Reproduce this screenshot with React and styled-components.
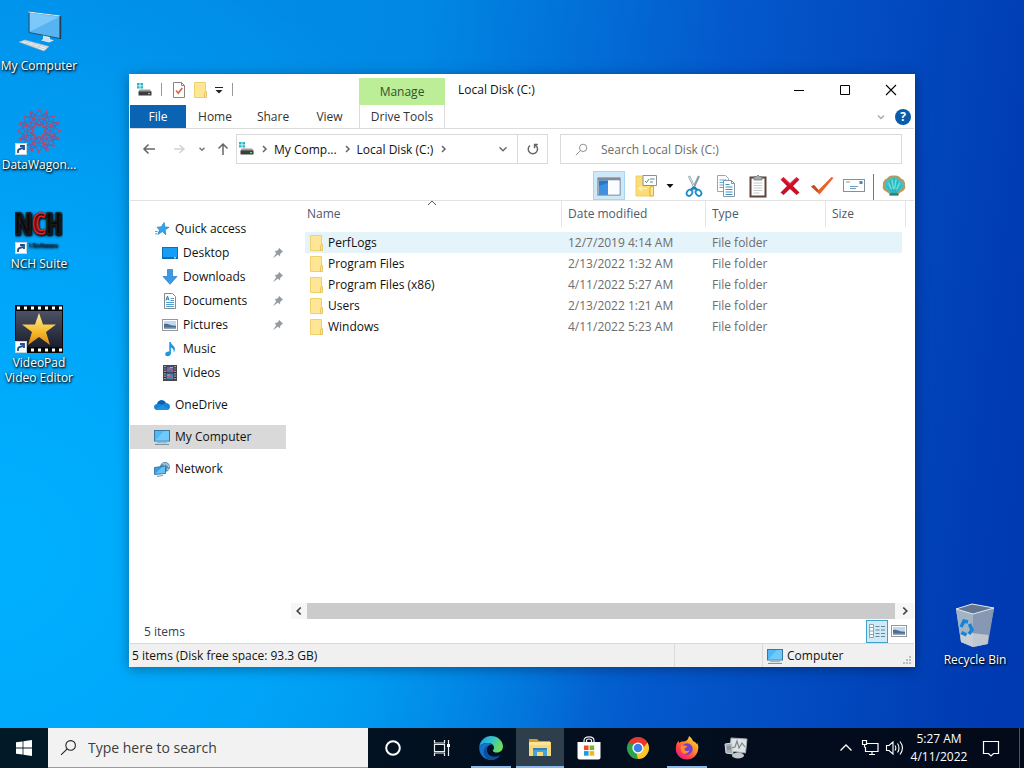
import React from 'react'
import styled, { createGlobalStyle, css } from 'styled-components'

const GlobalStyle = createGlobalStyle`
	* {
		box-sizing: border-box;
	}
	body {
		margin: 0;
		font-family: 'Open Sans', 'Noto Sans', sans-serif;
		font-size: 12px;
		color: #111;
	}
	button, input {
		font: inherit;
		color: inherit;
		background: none;
		border: 0;
		padding: 0;
		margin: 0;
	}
	a {
		color: inherit;
		text-decoration: none;
	}
	ul {
		list-style: none;
		margin: 0;
		padding: 0;
	}
	svg {
		display: block;
		flex: none;
	}
`

/* ---------- icons ---------- */

const Svg = ({ size = 16, w, h, box = 16, children }) => (
	<svg width={w || size} height={h || size} viewBox={typeof box === 'string' ? box : `0 0 ${box} ${box}`} fill="none" aria-hidden="true">
		{children}
	</svg>
)

const Line = ({ d, size = 16, box = 16, color = '#666', width = 1.5 }) => (
	<Svg size={size} box={box}>
		<path d={d} stroke={color} strokeWidth={width} />
	</Svg>
)

const DriveIcon = () => (
	<Svg>
		<path d="M1 1h2.600v2.400H1zM4.400 1H7v2.400H4.400zM1 4.200h2.600v2.400H1zM4.400 4.200H7v2.400H4.400z" fill="#25b5c4" />
		<path d="M3.500 7.500h10.500l1.500 2.500h-13z" fill="#9a9a9a" />
		<rect x="2.500" y="9.500" width="13" height="4" fill="#3d3d3d" />
		<rect x="12" y="11" width="2" height="1.200" fill="#5fe070" />
	</Svg>
)

const PropsIcon = () => (
	<Svg>
		<path d="M2.500.5h8l3 3v12h-11z" fill="#fff" stroke="#858585" />
		<path d="M10.500.5v3h3" stroke="#858585" />
		<path d="M5 8.500l2.300 2.500 4-5" stroke="#dd6b50" strokeWidth="1.800" />
	</Svg>
)

const FolderIcon = () => (
	<Svg>
		<path d="M1.500.5h11v15h-11z" fill="#ffe596" stroke="#f0cf6d" />
		<path d="M11.500 15.500V11l1-1.500h1v6z" fill="#ffe793" stroke="#e3bd55" strokeWidth=".8" />
	</Svg>
)

const StarIcon = () => (
	<Svg>
		<path d="M10.200 1.500l.6 4.500 4.200.3-3.800 2.500.6 5-3.400-3.300-4.600 3 1.700-4.500-2.500-2.700 4.100-.4z" fill="#35a5ea" stroke="#1781cc" strokeWidth=".7" />
		<path d="M1 10.500h2.500M1 12.800h2" stroke="#35a5ea" />
	</Svg>
)

const DesktopIcon = () => (
	<Svg>
		<rect x=".5" y="2.500" width="15" height="11" fill="#169df5" stroke="#0b71b9" />
		<path d="M1 12.800h14" stroke="#1b5f93" strokeWidth="1.200" />
		<path d="M12 12.800h2" stroke="#fff" strokeWidth="1" />
	</Svg>
)

const DownloadIcon = () => (
	<Svg>
		<path d="M5.500.5h5v7h4.500L8 15.300 1 7.500h4.500z" fill="#3b9ae8" stroke="#2478bd" strokeWidth=".7" />
	</Svg>
)

const DocIcon = () => (
	<Svg>
		<path d="M2.500.5h8l3 3v12h-11z" fill="#fff" stroke="#838b90" />
		<path d="M8.500 5.500H12M8.500 7.500H12M4 9.500h8M4 11.500h8M4 13.500h8" stroke="#4192c5" strokeWidth=".9" />
		<path d="M4 7.500l1.500-4.500L7 7.500M4.500 6h2" stroke="#2c7db0" />
	</Svg>
)

const PictureIcon = () => (
	<Svg>
		<rect x=".5" y="2.500" width="15" height="11" fill="#fff" stroke="#979797" />
		<path d="M2 4h12v8H2z" fill="#bed9f2" />
		<path d="M2 7c4-.8 6 2 12 1.800V12H2z" fill="#4e6d8f" />
		<path d="M2 10.500h12V12H2z" fill="#8fa7ba" />
	</Svg>
)

const MusicIcon = () => (
	<Svg>
		<path d="M7.300 1h1.600c.2 3 4.100 3.800 4 7.200 0 1.300-.6 2.300-1.300 3 .5-2.600-.6-4-2.700-4.700v5.700c0 1.800-1.600 3-3.300 3-1.500 0-2.400-.9-2.400-2 0-1.600 1.800-2.800 4.100-2.600z" fill="#1c97dc" />
	</Svg>
)

const VideoIcon = () => (
	<Svg>
		<rect x="1.500" y=".5" width="13" height="15" fill="#2e2e34" stroke="#474747" />
		<path d="M3 1v14M13 1v14" stroke="#e8e8e8" strokeWidth="1.200" strokeDasharray="1.200 1.200" />
		<rect x="4.500" y="1.500" width="7" height="6" fill="#536ba6" />
		<rect x="4.500" y="8.500" width="7" height="6" fill="#3d84bd" />
		<path d="M5 5.500l3-2 3 3M5 12.500l3-1.500 3 2" stroke="#c65a7b" strokeWidth="1.200" />
		<path d="M8 2.500h3M5 10h3" stroke="#cfb04e" />
	</Svg>
)

const CloudIcon = () => (
	<Svg>
		<path d="M3.500 13C1.500 13 0 11.700 0 9.900 0 8.200 1.400 7 3 6.900 3.600 4.700 5.500 3.200 7.600 3.200c2 0 3.500 1.100 4.300 2.900C14.200 6.200 16 7.700 16 9.700 16 11.600 14.600 13 12.700 13z" fill="#1583d8" />
		<path d="M3 6.900C3.600 4.700 5.500 3.200 7.600 3.200c2 0 3.500 1.100 4.300 2.900-1.500 0-2.800.6-3.700 1.700C6.600 6.900 4.800 6.600 3 6.900z" fill="#0a5fae" />
		<path d="M1.500 12.300L8.200 8l6.600 4.200c-.6.5-1.300.8-2.100.8H3.500c-.7 0-1.400-.3-2-.7z" fill="#1f93e3" />
	</Svg>
)

const ComputerIcon = () => (
	<Svg>
		<rect x=".5" y="1.500" width="15" height="10.500" fill="#4fb8f5" stroke="#38779f" />
		<path d="M1 11.500L10 2h5v9.500z" fill="#6fc9fb" />
		<path d="M3 13.500h10" stroke="#a2b4be" />
		<path d="M1 15.400h14" stroke="#6f8b9b" />
	</Svg>
)

const NetworkIcon = () => (
	<Svg>
		<circle cx="11" cy="6" r="5" fill="#5a93b6" />
		<path d="M8.500 3c2-1 3 1 2 2M12 2c0 2 2.500 2 3 4M13 8l2 1" stroke="#bcd2dc" strokeWidth="1.200" />
		<path d="M.5 6.500l11-1.500v7.500L.5 13.500z" fill="#399de0" stroke="#226b9e" strokeWidth=".8" />
		<path d="M1.200 12.800L8 6l3-.4v6.300z" fill="#65c1f5" />
		<path d="M3 15.300l6-.8" stroke="#84a1b1" strokeWidth="1.200" />
	</Svg>
)

const PinIcon = () => (
	<Svg size={12} box={12}>
		<path d="M7 .8L11.200 5l-1.300.2-1.700 1.700-.2 2.600-2-2L1 11.200l3.300-5.300-1.800-2 2.600-.2 1.700-1.600z" fill="#939ba1" />
	</Svg>
)

const SearchIcon = ({ size, color }) => (
	<Svg size={size}>
		<circle cx="10" cy="6" r="4.500" stroke={color} />
		<path d="M6.800 9.200L1 15" stroke={color} />
	</Svg>
)

const PanesIcon = () => (
	<Svg w={24} h={20} box="0 0 24 20">
		<rect x="1" y="2" width="22" height="17" fill="#dceffc" stroke="#66707a" />
		<path d="M1 2h22v2.500H1z" fill="#858c93" />
		<rect x="2" y="4.500" width="9" height="14" fill="#2479cf" />
		<rect x="11" y="4.500" width="11.500" height="14" fill="#fafdff" />
		<path d="M2 10l9-3v11.500H2z" fill="#3d91e0" />
	</Svg>
)

const FolderOptionsIcon = () => (
	<Svg size={24} box={24}>
		<path d="M2 2h16v20H2z" fill="#fbdc75" stroke="#f0cf68" />
		<path d="M16 22v-8l2-2h1.500v10z" fill="#ffe78e" stroke="#d8ae3c" />
		<path d="M9 1.500h13.500v10H9z" fill="#fff" stroke="#8b9298" />
		<path d="M11 7l1.500 1.500L15 5M16 5h4.500M16 8h3" stroke="#5584a8" />
		<path d="M5 14.500h8M8 12l-3 2.500L8 17" stroke="#fff0b3" strokeWidth="1.300" />
	</Svg>
)

const CutIcon = () => (
	<Svg size={24} box={24}>
		<path d="M7 2l6.500 14M17 2l-6.500 14" stroke="#8b9aa5" strokeWidth="2.200" />
		<path d="M7.300 2.500L12 12.500" stroke="#e7eef2" />
		<path d="M12 13l-3.500 3M12 13l3.500 3" stroke="#187db9" strokeWidth="2.200" />
		<ellipse cx="7.500" cy="18.800" rx="2.600" ry="3.200" transform="rotate(35 7.500 18.800)" stroke="#168bc9" strokeWidth="1.800" />
		<ellipse cx="16.500" cy="18.800" rx="2.600" ry="3.200" transform="rotate(-35 16.500 18.800)" stroke="#168bc9" strokeWidth="1.800" />
	</Svg>
)

const CopyIcon = () => (
	<Svg size={24} box={24}>
		<path d="M3.500 1.500h8l3 3v13h-11z" fill="#fff" stroke="#9aa8b3" />
		<path d="M5.500 6h7M5.500 8.500h7M5.500 11h7M5.500 13.500h5" stroke="#68a4cc" />
		<path d="M9.500 6.500h8l3 3v13h-11z" fill="#fff" stroke="#8797a3" />
		<path d="M17.500 6.500v3h3" stroke="#8797a3" />
		<path d="M11.500 10.500h4M11.500 13h7M11.500 15.500h7M11.500 18h7M11.500 20.500h7" stroke="#3f8fc5" />
	</Svg>
)

const PasteIcon = () => (
	<Svg size={24} box={24}>
		<rect x="4.500" y="3.500" width="15" height="19" fill="#fff" stroke="#5b4439" strokeWidth="2" />
		<path d="M8 2.500h2.500L12 1l1.500 1.500H16v3.500H8z" fill="#a5aaac" stroke="#747a7d" strokeWidth=".8" />
		<path d="M7.500 9h9M7.500 11.500h9M7.500 14h9M7.500 16.500h9M7.500 19h6" stroke="#c3c9cc" />
	</Svg>
)

const DeleteIcon = () => (
	<Svg size={24} box={24}>
		<path d="M2.500 5.500L5.500 3 12 9l6.500-6 3 2.500L15 12l6.500 6.500-3 2.500L12 15l-6.500 6-3-2.500L9 12z" fill="#c9102a" />
		<path d="M3.500 5.500l2-1.500L12 10.300 18.500 4l1.500 1.500" stroke="#ee3a4c" />
	</Svg>
)

const CheckIcon = () => (
	<Svg size={24} box={24}>
		<path d="M1 12.500L4 11l4.500 5L21.500 3l2 1-14 16.500z" fill="#e8632c" />
		<path d="M1 12.500L4 11l4.500 5-.8 2.300z" fill="#c94d20" />
	</Svg>
)

const MailIcon = () => (
	<Svg size={24} box={24}>
		<rect x="1.500" y="5.500" width="21" height="12" fill="#fff" stroke="#84909a" />
		<rect x="17.500" y="7" width="3" height="3" fill="#3f8ac5" />
		<path d="M4 8h4M8 12.500h8M8 14.500h6" stroke="#6f9fc3" />
	</Svg>
)

const ShellIcon = () => (
	<Svg size={24} box={24}>
		<path d="M12 1.500c3-.5 5.500.5 7 3 3 1 4.500 4 4 6.500 1 3-.5 5.500-3 6.500L17 19.500v2H7v-2l-3-2c-2.500-1-4-3.500-3-6.500-.5-2.500 1-5.500 4-6.500 1.500-2.500 4-3.500 7-3z" fill="#b59a63" />
		<path d="M12 3.500c3 0 5 1.500 6 3 2.500 1 3.300 3 3 4.500.5 2-.5 4-3 5l-3.500 4h-5L6 16c-2.500-1-3.500-3-3-5-.3-1.500.5-3.500 3-4.500 1-1.500 3-3 6-3z" fill="#38c6cd" />
		<path d="M12 4v15M8 6l3 13M16 6l-3 13M4 11l6 8M20 11l-6 8" stroke="#22a6b0" strokeWidth=".7" />
		<path d="M10 6l1.500 9M14 6l-1.500 9M6.500 9l3 6M17.500 9l-3 6" stroke="#7ae2e1" strokeWidth="1.100" />
		<path d="M8 19h8v2.500H8z" fill="#2c8580" />
	</Svg>
)

const DetailsIcon = () => (
	<Svg w={18} h={16} box="0 0 18 16">
		<path d="M1.500 1.500h4v13h-4zM1.500 4.500h4M1.500 8h4M1.500 11.500h4" fill="#fff" stroke="#8da3b0" />
		<path d="M7.500 3.500h4M13 3.500h4M7.500 7h4M13 7h4M7.500 10.500h4M13 10.500h4M7.500 13.500h4M13 13.500h4" stroke="#6e8494" />
	</Svg>
)

const ShortcutArrow = styled.span`
	position: absolute;
	left: 0;
	bottom: 0;
	width: 12px;
	height: 12px;
	background: #fff;
	border: 1px solid #c7d3dd;
`

const BigComputer = () => (
	<Svg size={48} box={48}>
		<path d="M14 4l31 4v22.500L14 24.500z" fill="#55b4f1" stroke="#2e4f68" />
		<path d="M15 5l29 4L15 23.500z" fill="#7cc8f8" />
		<path d="M13.500 4l31.500 4" stroke="#e3f2fc" />
		<path d="M45.500 8v23" stroke="#263e50" strokeWidth="1.500" />
		<path d="M28 27.500l7 1.500v2l4 1.500-5 2-8-2 2-1.500z" fill="#d4e2eb" />
		<path d="M4 34l6-2 24 6.500-5 4.500z" fill="#edf1f3" stroke="#9faeb7" strokeWidth=".7" />
		<path d="M7 34.500l23 6.500M9 33l23 6.500M11 36.500l4-3M17 38.500l4-3M22 40l4-3" stroke="#b5c4cd" strokeWidth=".7" />
	</Svg>
)

const spokes = [0, 45, 90, 135, 180, 225, 270, 315]

const WagonIcon = () => (
	<Svg size={48} box={48}>
		{spokes.map(a => (
			<g key={a} transform={`rotate(${a} 24 24)`} stroke="#5f62a8" strokeWidth="1">
				<path d="M24 18l-6-6 6-9 6 9z M18 12h12 M18 12l-3-7 9 5 9-5-3 7" />
				<path d="M20 20l4-8 4 8" stroke="#9a4f80" />
				<g fill="#c34a68" stroke="none">
					<circle cx="24" cy="3.500" r="1.500" />
					<circle cx="15.500" cy="5.500" r="1.500" />
					<circle cx="18" cy="12" r="1.500" />
					<circle cx="30" cy="12" r="1.500" />
					<circle cx="24" cy="18" r="1.500" />
				</g>
			</g>
		))}
	</Svg>
)

const NchIcon = () => (
	<Svg size={48} box={48}>
		<text x="23" y="28" fontSize="29" fontWeight="700" textAnchor="middle" fontFamily="'Liberation Sans Narrow', 'Open Sans Condensed', 'Roboto Condensed', 'Liberation Sans', sans-serif" fill="#1b1c20" stroke="#1b1c20" strokeWidth="1.500">
			N<tspan fill="#e0262b" stroke="#e0262b">C</tspan>H
		</text>
		<text x="14" y="41" fontSize="6" fontWeight="700" fontFamily="Liberation Sans, sans-serif" fill="#15355e">l Software</text>
	</Svg>
)

const VideoPadIcon = () => (
	<Svg size={48} box={48}>
		<defs>
			<linearGradient id="vpStar" x1="0" y1="0" x2="0" y2="1">
				<stop offset="0" stopColor="#fff09a" />
				<stop offset=".6" stopColor="#f5b92a" />
				<stop offset="1" stopColor="#d98910" />
			</linearGradient>
			<linearGradient id="vpBg" x1="0" y1="0" x2="0" y2="1">
				<stop offset="0" stopColor="#4d5165" />
				<stop offset="1" stopColor="#1b1e2d" />
			</linearGradient>
		</defs>
		<rect width="48" height="48" fill="#080808" />
		<rect x="1" y="6" width="46" height="36" fill="url(#vpBg)" />
		<path d="M2 3h46M2 45h46" stroke="#fff" strokeWidth="3" strokeDasharray="3 4" />
		<path d="M24 8l4 11.500h13L31 27l4 13-11-8-11 8 4-13L7 19.500h13z" fill="url(#vpStar)" />
	</Svg>
)

const RecycleIcon = () => (
	<Svg size={48} box={48}>
		<path d="M5 7L21 2l22 4-7 36-14 3-12-5z" fill="#a9b9c8" />
		<path d="M5 7l17 5v33l-12-5z" fill="#a3b3c6" />
		<path d="M22 12l21-6-6 36-15 3z" fill="#8798b4" />
		<path d="M5 7L21 2l22 4-21 6z" fill="#63758f" stroke="#dfe7ee" />
		<path d="M9.500 33L21 31l16.500 2-1 9L22 45l-12-5z" fill="#d4d7da" opacity=".75" />
		<path d="M10 25l3-6 4 1M18.500 22l2.500 6-3 4M15.500 33l-5-2.500" stroke="#1583d6" strokeWidth="3.500" />
	</Svg>
)

/* ---------- task bar icons ---------- */

const StartIcon = () => (
	<Svg>
		<path d="M0 2.300L6.600 1.400v6.200H0zM7.400 1.300L16 0v7.600H7.400zM0 8.400h6.600v6.200L0 13.700zM7.400 8.400H16V16l-8.600-1.200z" fill="#fff" />
	</Svg>
)

const TaskViewIcon = () => (
	<Svg size={18} box={18}>
		<path d="M1.500 1v3h10V1M1.500 17v-3h10v3M1.500 5.500h10v7h-10zM15.500 1v16" stroke="#eee" strokeWidth="1.200" />
		<rect x="14" y="5" width="3" height="3" fill="#fff" />
	</Svg>
)

const EdgeIcon = () => (
	<Svg size={24} box={24}>
		<defs>
			<linearGradient id="edgeTop" x1="0" y1="0" x2="1" y2=".3">
				<stop offset="0" stopColor="#2197dd" />
				<stop offset=".5" stopColor="#2fc0d2" />
				<stop offset="1" stopColor="#6edc5d" />
			</linearGradient>
		</defs>
		<path d="M.3 10.500C1.300 4.500 6.200 0 12 0c6.800 0 12 5 12 10.500 0 3.800-2.800 6-6 6-2.600 0-4.200-1-4.200-1.800 0-.5 1.200-1 1.200-2.900 0-2.800-2.800-4.800-6.200-4.800-4 0-7 1.500-8.500 3.500z" fill="url(#edgeTop)" />
		<path d="M.3 10.500C1.800 8.300 5 7 8.800 7c1.600 0 3 .4 4 1.200-3 .3-5 3-5 5.800 0 5.500 5.700 8.500 11.500 6.700C17.200 22.800 14.700 24 12 24 5 24-.6 18 .3 10.500z" fill="#1473c8" />
		<path d="M12.800 8.200C9 8.800 7.800 11.500 7.800 14c0 5.500 6 8.600 13.700 5-2 3-5.500 5-9.500 5-4.500 0-7.300-4.200-7.300-8.200 0-4 3.800-7.800 8.100-7.600z" fill="#0d4d9f" />
	</Svg>
)

const ExplorerIcon = () => (
	<Svg size={24} box={24}>
		<path d="M1 3h8l2 2h11v4H1z" fill="#d89b27" />
		<path d="M1 7l22-1v14H1z" fill="#f8d775" />
		<path d="M1 6h21v3H1z" fill="#ffe396" />
		<path d="M5 20v-8h14v8h-4v-4H9v4z" fill="#43a2dc" />
		<path d="M5 12h14v2H5z" fill="#2e82b9" />
	</Svg>
)

const StoreIcon = () => (
	<Svg size={24} box={24}>
		<path d="M7 7V4.500C7 2 9 .8 12 .8s5 1.200 5 3.700V7M9.500 7V4.500c0-2 5-2 5 0V7" stroke="#f0f0f0" strokeWidth="1.200" />
		<path d="M.5 6h23v15.500a2 2 0 0 1-2 2h-19a2 2 0 0 1-2-2z" fill="#fff" />
		<path d="M7 9.500h4.600v4.600H7z" fill="#e9502e" />
		<path d="M12.600 9.500h4.600v4.600h-4.600z" fill="#76b82a" />
		<path d="M7 15.100h4.600v4.600H7z" fill="#1b9be0" />
		<path d="M12.600 15.100h4.600v4.600h-4.600z" fill="#f7b519" />
	</Svg>
)

const ChromeIcon = () => (
	<Svg size={24} box={24}>
		<path d="M12 12L2.470 6.500A11 11 0 0 1 21.530 6.500z" fill="#e5392e" />
		<path d="M12 12L2.470 6.500A11 11 0 0 0 12 23z" fill="#2da14b" />
		<path d="M12 12L21.530 6.500A11 11 0 0 1 12 23z" fill="#fcc72b" />
		<path d="M12 6.500h9.530L16 13z" fill="#e5392e" />
		<path d="M12 23l5-8.500-7 1z" fill="#fcc72b" />
		<path d="M2.470 6.500l5 8.500 1-6z" fill="#2da14b" />
		<circle cx="12" cy="12" r="5.600" fill="#fff" />
		<circle cx="12" cy="12" r="4.300" fill="#3b7fe8" />
	</Svg>
)

const FirefoxIcon = () => (
	<Svg size={24} box={24}>
		<defs>
			<linearGradient id="ffBody" x1="1" y1="0" x2="0.200" y2="1">
				<stop offset="0" stopColor="#fff04a" />
				<stop offset=".4" stopColor="#ff9a26" />
				<stop offset=".75" stopColor="#ff3e4c" />
				<stop offset="1" stopColor="#e61b86" />
			</linearGradient>
		</defs>
		<path d="M14 0c2.500 1.500 3.200 3.200 4 5 2 .7 3.500 2.200 4.200 3.800L22 6.500c1.200 1.800 1.500 4 1.300 6C22.700 19 18 23.500 12 23.500 5.500 23.500.8 18.500.8 12.700c0-3.700 1.200-6.200 2.700-8L4 7l2.500-1.500c2 .2 3.500 0 5-1 1.300-1 2-2.500 2.500-4.500z" fill="url(#ffBody)" />
		<circle cx="12" cy="13" r="5.700" fill="#6f40d8" />
		<path d="M6.500 9c2 .8 4 .3 6 1.200-1 1.500-3 1.500-3 3 .3 1.800 3 2.500 5 1-.8 3-4 4.300-6.500 3-2.300-1.500-3-5-1.500-8.200z" fill="#ff8a2b" />
	</Svg>
)

const MonitorIcon = () => (
	<Svg size={24} box={24}>
		<path d="M7 2l16 1-1.500 14L6 15z" fill="#dfe3e6" stroke="#a6adb1" />
		<path d="M1 8l7-1 1 11-7-1z" fill="#a8afb4" stroke="#d8dcde" />
		<path d="M8 12l3-1 2-6 2 7 3-5 3 4" stroke="#7c868c" strokeWidth="1.200" />
		<path d="M3 11h4M3 13h4" stroke="#747c82" />
		<ellipse cx="14" cy="19.500" rx="6" ry="3" fill="#c3c8cb" />
	</Svg>
)

const TrayNetwork = () => (
	<Svg size={18} box={18}>
		<path d="M6 4.500h11v8H4.500V8M8 15.500h6M11 12.500v3M1.500 1.500h4v4h-4zM3.500 5.500v3" stroke="#fff" strokeWidth="1.200" />
	</Svg>
)

const TraySpeaker = () => (
	<Svg size={18} box={18}>
		<path d="M1.500 6.500H4L8 3v12l-4-3.500H1.500zM10 6.500c1 1.500 1 3.500 0 5M12.500 4.500c2 2.500 2 6.500 0 9M15 2.500c3 4 3 9 0 13" stroke="#fff" strokeWidth="1.100" />
	</Svg>
)

/* ---------- desktop ---------- */

const Screen = styled.div`
	display: flex;
	flex-direction: column;
	min-height: 100vh;
	background:
		radial-gradient(ellipse 60% 80% at 0% 72%, #00b0ff 0%, rgba(0, 170, 252, 0.85) 45%, rgba(0, 140, 235, 0) 100%),
		linear-gradient(97deg, #0090ea 0%, #0088e4 38%, #0458cb 66%, #003ab2 96%);
`

const DesktopArea = styled.main`
	position: relative;
	flex: 1;
`

const Shortcuts = styled.div`
	display: grid;
	grid-auto-rows: 99px;
	width: 78px;
	padding-top: 8px;
`

const Shortcut = styled.a`
	display: flex;
	flex-direction: column;
	align-items: center;
	gap: 2px;
	width: 78px;
	min-height: 99px;
	color: #fff;
	line-height: 15px;
	text-align: center;
	white-space: nowrap;
	text-shadow: 1px 1px 2px #000, 0 1px 3px rgba(0, 0, 0, 0.8);
`

const ShortcutPicture = styled.span`
	position: relative;
`

const BinSlot = styled.div`
	position: absolute;
	right: 10px;
	bottom: 27px;
`

const DesktopShortcut = ({ icon, linked, children }) => (
	<Shortcut href="#">
		<ShortcutPicture>
			{icon}
			{linked && (
				<ShortcutArrow>
					<Line size={10} box={10} d="M2 9V7q0-2 5-3M4 2h4v4" color="#1d4f91" width={1.8} />
				</ShortcutArrow>
			)}
		</ShortcutPicture>
		<span>{children}</span>
	</Shortcut>
)

/* ---------- explorer window ---------- */

const Window = styled.section`
	position: absolute;
	top: 74px;
	right: 109px;
	bottom: 61px;
	left: 129px;
	display: flex;
	flex-direction: column;
	padding: 0 1px;
	background: #fff;
	box-shadow: 0 2px 12px rgba(0, 0, 0, 0.35);
`

const TitleBar = styled.header`
	display: grid;
	grid-template-columns: 229px 86px 1fr auto;
	height: 31px;
`

const QuickTools = styled.div`
	display: flex;
	align-items: center;
	gap: 6px;
	padding-left: 6px;
`

const IconButton = styled.button`
	display: flex;
	align-items: center;
	justify-content: center;
	width: ${p => p.$w || 16}px;
	height: ${p => p.$h || 16}px;
`

const Separator = styled.span`
	width: 1px;
	height: ${p => p.$h || 13}px;
	background: ${p => p.$color || '#999'};
	margin: 0 3px;
`

const ManageTab = styled.div`
	display: flex;
	align-items: center;
	justify-content: center;
	margin-top: 4px;
	background: #bcee98;
	color: #33502a;
`

const WindowTitle = styled.h1`
	margin: 0;
	padding-left: 13px;
	font-size: 12px;
	font-weight: 400;
	line-height: 31px;
`

const WindowButtons = styled.div`
	display: flex;
`

const Ribbon = styled.nav`
	display: flex;
	height: 24px;
	border-bottom: 1px solid #dcdcdc;
	color: #333;
`

const RibbonTab = styled.button`
	width: ${p => p.$w}px;
	${p => p.$file && css`
		background: #0a63b3;
		color: #fff;
	`}
	${p => p.$context && css`
		margin-left: 2px;
		border-left: 1px solid #dcdcdc;
		border-right: 1px solid #dcdcdc;
	`}
`

const RibbonEnd = styled.div`
	display: flex;
	align-items: center;
	gap: 6px;
	margin-left: auto;
	padding-right: 3px;
`

const HelpButton = styled.button`
	width: 16px;
	height: 16px;
	border-radius: 50%;
	background: #0a5cab;
	color: #fff;
	font-weight: 700;
	line-height: 16px;
`

const AddressRow = styled.div`
	display: flex;
	align-items: center;
	height: 40px;
	padding: 0 12px 0 4px;
`

const AddressFields = styled.div`
	display: grid;
	grid-template-columns: 312fr 342fr;
	gap: 12px;
	flex: 1;
`

const AddressBox = styled.div`
	display: flex;
	align-items: center;
	height: 30px;
	border: 1px solid #d9d9d9;
	padding-left: 1px;
`

const Crumb = styled.a`
	white-space: nowrap;
`

const AddressEnd = styled.div`
	display: flex;
	align-self: stretch;
	margin-left: auto;
`

const RefreshButton = styled(IconButton)`
	border-left: 1px solid #d9d9d9;
`

const SearchBox = styled.label`
	display: flex;
	align-items: center;
	gap: 13px;
	height: 30px;
	padding: 0 14px;
	border: 1px solid #d9d9d9;

	input {
		flex: 1;
		min-width: 0;
		outline: 0;
	}
	input::placeholder {
		color: #6d6d6d;
		opacity: 1;
	}
`

const ToolRow = styled.div`
	display: flex;
	align-items: flex-end;
	justify-content: flex-end;
	height: 32px;
	padding-right: 3px;
	border-bottom: 1px solid #e2e2e2;
`

const ToolButton = styled(IconButton)`
	${p => p.$active && css`
		margin-right: 5px;
		background: #cce8f9;
		border: 1px solid #a9d6f0;
	`}
`

const Body = styled.div`
	display: flex;
	flex: 1;
	min-height: 0;
`

const SidePane = styled.nav`
	width: 161px;
	padding: 16px 5px 0 0;
`

const Tree = styled.ul`
	margin-bottom: 8px;
`

const TreeLink = styled.a`
	display: flex;
	align-items: center;
	gap: 5px;
	height: 24px;
	padding: 0 2px 1px ${p => (p.$nested ? 32 : 24)}px;
	background: ${p => (p.$selected ? '#d9d9d9' : 'transparent')};

	svg:last-child:not(:first-child) {
		margin-left: auto;
	}
`

const FilePane = styled.div`
	display: flex;
	flex-direction: column;
	flex: 1;
	min-width: 0;
`

const TableArea = styled.div`
	flex: 1;
	padding: 0 8px 0 14px;
`

const FileTable = styled.table`
	width: 100%;
	table-layout: fixed;
	border-collapse: separate;
	border-spacing: 0;

	th {
		position: relative;
		padding: 0 0 5px;
		font-weight: 400;
		text-align: left;
		color: #4c5a6b;
	}
	td {
		height: 21px;
		padding: 0 0 0 6px;
		line-height: 16px;
		color: #6d6d6d;
	}
	td:first-child {
		padding-left: 4px;
		color: #111;
	}
	td:last-child {
		border-right: 4px solid transparent;
		background-clip: padding-box;
	}
`

const HeadCell = styled.span`
	display: block;
	padding-left: ${p => (p.$first ? 2 : 6)}px;
	line-height: 26px;
	border-right: 1px solid #e5e5e5;
`

const SortMark = styled.span`
	position: absolute;
	top: -2px;
	left: 50%;
	margin-left: -7px;
`

const FileRow = styled.tr`
	td {
		background-color: ${p => (p.$hover ? '#e5f3fb' : 'transparent')};
	}
`

const FileName = styled.a`
	display: flex;
	align-items: center;
	gap: 3px;
`

const ScrollBar = styled.div`
	display: flex;
	height: 16px;
	background: #f6f6f6;
`

const ScrollThumb = styled.div`
	flex: 1;
	background: #cbcbcb;
`

const DetailsBar = styled.div`
	display: flex;
	align-items: center;
	height: 24px;
	padding: 0 4px 0 14px;
	color: #33405a;
`

const ViewButtons = styled.div`
	display: flex;
	margin-left: auto;
`

const ViewButton = styled(IconButton)`
	${p => p.$active && css`
		background: #cdeaf8;
		border: 1px solid #3fa0c9;
	`}
`

const StatusBar = styled.footer`
	display: flex;
	height: 24px;
	line-height: 23px;
	background: #f0f0f0;
	border-top: 1px solid #d9d9d9;
`

const StatusCell = styled.div`
	display: flex;
	align-items: center;
	gap: 4px;
	padding-left: ${p => p.$pad || 0}px;
	border-left: ${p => (p.$line ? '1px solid #dadada' : '0')};
	${p => (p.$w ? css`width: ${p.$w}px;` : css`flex: 1;`)}
`

const Grip = styled.span`
	align-self: flex-end;
	margin: 0 2px 2px auto;
`

/* ---------- task bar ---------- */

const TaskBar = styled.footer`
	display: flex;
	gap: 1px;
	height: 40px;
	background: linear-gradient(90deg, #021a28, #020f1f 50%, #030a1a);
	color: #fff;
`

const StartButton = styled(IconButton)`
	margin-right: -1px;
`

const TaskSearch = styled.label`
	display: flex;
	align-items: center;
	gap: 11px;
	width: 320px;
	padding: 0 12px;
	background: #f2f2f2;
	border: 1px solid #9a9a9a;
	border-width: 0 0 1px;

	input {
		flex: 1;
		min-width: 0;
		outline: 0;
		font-size: 14px;
		color: #222;
	}
	input::placeholder {
		color: #3d3d3d;
		opacity: 1;
	}
`

const TaskButton = styled.button`
	position: relative;
	display: flex;
	align-items: center;
	justify-content: center;
	width: 48px;
	background: ${p => (p.$active ? '#2f3e4b' : 'transparent')};

	&::after {
		content: '';
		position: absolute;
		bottom: 0;
		left: ${p => (p.$active ? 0 : 4)}px;
		right: ${p => (p.$active ? 0 : 4)}px;
		height: 2px;
		background: ${p => (p.$running ? '#8ab8ea' : 'transparent')};
	}
`

const Tray = styled.div`
	display: flex;
	align-items: center;
	margin-left: auto;
`

const Clock = styled.time`
	width: 66px;
	text-align: center;
	line-height: 18px;
`

const ShowDesktop = styled.button`
	width: 5px;
	height: 40px;
	margin-left: 9px;
	border-left: 1px solid #4b535e;
`

const quickLinks = [
	{ name: 'Desktop', icon: <DesktopIcon />, pinned: true },
	{ name: 'Downloads', icon: <DownloadIcon />, pinned: true },
	{ name: 'Documents', icon: <DocIcon />, pinned: true },
	{ name: 'Pictures', icon: <PictureIcon />, pinned: true },
	{ name: 'Music', icon: <MusicIcon /> },
	{ name: 'Videos', icon: <VideoIcon /> },
]

const folders = [
	{ name: 'PerfLogs', date: '12/7/2019 4:14 AM' },
	{ name: 'Program Files', date: '2/13/2022 1:32 AM' },
	{ name: 'Program Files (x86)', date: '4/11/2022 5:27 AM' },
	{ name: 'Users', date: '2/13/2022 1:21 AM' },
	{ name: 'Windows', date: '4/11/2022 5:23 AM' },
]

const tools = [
	{ name: 'Cut', icon: <CutIcon /> },
	{ name: 'Copy', icon: <CopyIcon /> },
	{ name: 'Paste', icon: <PasteIcon /> },
	{ name: 'Delete', icon: <DeleteIcon /> },
	{ name: 'Properties', icon: <CheckIcon /> },
	{ name: 'Email', icon: <MailIcon /> },
]

const apps = [
	{ name: 'Cortana', icon: <Svg><circle cx="8" cy="8" r="6.800" stroke="#fff" strokeWidth="2" /></Svg> },
	{ name: 'Task View', icon: <TaskViewIcon /> },
	{ name: 'Edge', icon: <EdgeIcon />, running: true },
	{ name: 'File Explorer', icon: <ExplorerIcon />, running: true, active: true },
	{ name: 'Store', icon: <StoreIcon /> },
	{ name: 'Chrome', icon: <ChromeIcon /> },
	{ name: 'Firefox', icon: <FirefoxIcon />, running: true },
	{ name: 'Resource Monitor', icon: <MonitorIcon /> },
]

const CHEVRON_DOWN = 'M4 6l4 4 4-4'

const CrumbArrow = () => <Line d="M9 7l3 3-3 3" size={20} box={20} />

const Title = () => (
	<TitleBar>
		<QuickTools>
			<DriveIcon />
			<Separator />
			<IconButton aria-label="Properties"><PropsIcon /></IconButton>
			<IconButton aria-label="New folder"><FolderIcon /></IconButton>
			<IconButton aria-label="Customize" $w={8}>
				<Svg size={8} box={8}><path d="M0 1.500h8" stroke="#222" /><path d="M.5 4h7L4 7.500z" fill="#222" /></Svg>
			</IconButton>
			<Separator />
		</QuickTools>
		<ManageTab>Manage</ManageTab>
		<WindowTitle>Local Disk (C:)</WindowTitle>
		<WindowButtons>
			<IconButton aria-label="Minimize" $w={46} $h={31}><Line size={12} box={12} d="M1 6.500h10" color="#000" width={1} /></IconButton>
			<IconButton aria-label="Maximize" $w={46} $h={31}><Line size={12} box={12} d="M1.500 1.500h9v9h-9z" color="#000" width={1} /></IconButton>
			<IconButton aria-label="Close" $w={46} $h={31}><Line size={12} box={12} d="M1 1l10 10M11 1L1 11" color="#000" width={1.1} /></IconButton>
		</WindowButtons>
	</TitleBar>
)

const Address = () => (
	<AddressRow>
		<IconButton aria-label="Back" $w={30}><Line d="M14 8H3M7.500 3.500L3 8l4.500 4.500" /></IconButton>
		<IconButton aria-label="Forward" $w={30}><Line d="M3 8h10M8.500 4L13 8l-4.500 4" color="#d2d2d2" /></IconButton>
		<IconButton aria-label="Recent"><Line size={10} d={CHEVRON_DOWN} color="#777" width={2.4} /></IconButton>
		<IconButton aria-label="Up" $w={26}><Line d="M8 14V3M3.500 7.500L8 3l4.500 4.500" /></IconButton>
		<AddressFields>
			<AddressBox>
				<DriveIcon />
				<CrumbArrow />
				<Crumb href="#">My Comp...</Crumb>
				<CrumbArrow />
				<Crumb href="#">Local Disk (C:)</Crumb>
				<CrumbArrow />
				<AddressEnd>
					<IconButton aria-label="Previous locations" $w={28} $h={28}><Line size={14} d={CHEVRON_DOWN} /></IconButton>
					<RefreshButton aria-label="Refresh" $w={30} $h={28}>
						<Svg size={14}><path d="M4.500 4A5.300 5.300 0 1 0 10.500 3.500M13.500 2.800H9.800V7" stroke="#666" strokeWidth="1.700" /></Svg>
					</RefreshButton>
				</AddressEnd>
			</AddressBox>
			<SearchBox>
				<SearchIcon size={13} color="#777" />
				<input type="search" aria-label="Search Local Disk (C:)" placeholder="Search Local Disk (C:)" />
			</SearchBox>
		</AddressFields>
	</AddressRow>
)

const Tools = () => (
	<ToolRow>
		<ToolButton aria-label="Navigation pane" $w={32} $h={29} $active><PanesIcon /></ToolButton>
		<ToolButton aria-label="Folder options" $w={32} $h={29}><FolderOptionsIcon /></ToolButton>
		<ToolButton aria-label="More options" $w={16} $h={29}>
			<Svg size={8} box={8}><path d="M.5 2h7L4 6z" fill="#111" /></Svg>
		</ToolButton>
		{tools.map(tool => (
			<ToolButton key={tool.name} aria-label={tool.name} $w={32} $h={29}>{tool.icon}</ToolButton>
		))}
		<Separator $h={26} $color="#777" />
		<ToolButton aria-label="Classic settings" $w={34} $h={29}><ShellIcon /></ToolButton>
	</ToolRow>
)

const Sidebar = () => (
	<SidePane aria-label="Folders">
		<Tree>
			<li><TreeLink href="#"><StarIcon />Quick access</TreeLink></li>
			{quickLinks.map(link => (
				<li key={link.name}>
					<TreeLink href="#" $nested>
						{link.icon}
						{link.name}
						{link.pinned && <PinIcon />}
					</TreeLink>
				</li>
			))}
		</Tree>
		<Tree><li><TreeLink href="#"><CloudIcon />OneDrive</TreeLink></li></Tree>
		<Tree><li><TreeLink href="#" $selected><ComputerIcon />My Computer</TreeLink></li></Tree>
		<Tree><li><TreeLink href="#"><NetworkIcon />Network</TreeLink></li></Tree>
	</SidePane>
)

const Files = () => (
	<FilePane>
		<TableArea>
			<FileTable>
				<colgroup>
					<col />
					<col width="144" />
					<col width="120" />
					<col width="80" />
				</colgroup>
				<thead>
					<tr>
						<th>
							<HeadCell $first>Name</HeadCell>
							<SortMark><Line size={10} box={10} d="M1 6l4-4 4 4" color="#555" width={1} /></SortMark>
						</th>
						<th><HeadCell>Date modified</HeadCell></th>
						<th><HeadCell>Type</HeadCell></th>
						<th><HeadCell>Size</HeadCell></th>
					</tr>
				</thead>
				<tbody>
					{folders.map((folder, i) => (
						<FileRow key={folder.name} $hover={i === 0}>
							<td><FileName href="#"><FolderIcon />{folder.name}</FileName></td>
							<td>{folder.date}</td>
							<td>File folder</td>
							<td />
						</FileRow>
					))}
				</tbody>
			</FileTable>
		</TableArea>
		<ScrollBar>
			<IconButton aria-label="Scroll left"><Line d="M10 4L6 8l4 4" color="#444" width={2} size={14} /></IconButton>
			<ScrollThumb />
			<IconButton aria-label="Scroll right" $w={19}><Line d="M6 4l4 4-4 4" color="#444" width={2} size={14} /></IconButton>
		</ScrollBar>
	</FilePane>
)

const Explorer = () => (
	<Window>
		<Title />
		<Ribbon>
			<RibbonTab $w={56} $file>File</RibbonTab>
			<RibbonTab $w={58}>Home</RibbonTab>
			<RibbonTab $w={58}>Share</RibbonTab>
			<RibbonTab $w={55}>View</RibbonTab>
			<RibbonTab $w={86} $context>Drive Tools</RibbonTab>
			<RibbonEnd>
				<IconButton aria-label="Expand ribbon"><Line size={12} d={CHEVRON_DOWN} color="#aaa" width={2} /></IconButton>
				<HelpButton aria-label="Help">?</HelpButton>
			</RibbonEnd>
		</Ribbon>
		<Address />
		<Tools />
		<Body>
			<Sidebar />
			<Files />
		</Body>
		<DetailsBar>
			5 items
			<ViewButtons>
				<ViewButton aria-label="Details view" $w={22} $h={23} $active><DetailsIcon /></ViewButton>
				<ViewButton aria-label="Large icons view" $w={22} $h={23}><PictureIcon /></ViewButton>
			</ViewButtons>
		</DetailsBar>
		<StatusBar>
			<StatusCell $pad={2}>5 items (Disk free space: 93.3 GB)</StatusCell>
			<StatusCell $w={88} $line />
			<StatusCell $w={152} $pad={4} $line>
				<ComputerIcon />
				Computer
				<Grip>
					<Svg size={9} box={9}>
						<path d="M6 0h2v2H6zM3 3h2v2H3zM6 3h2v2H6zM0 6h2v2H0zM3 6h2v2H3zM6 6h2v2H6z" fill="#bcbcbc" />
					</Svg>
				</Grip>
			</StatusCell>
		</StatusBar>
	</Window>
)

const App = () => {
	return (
		<Screen>
			<GlobalStyle />
			<DesktopArea>
				<Shortcuts>
					<DesktopShortcut icon={<BigComputer />}>My Computer</DesktopShortcut>
					<DesktopShortcut icon={<WagonIcon />} linked>DataWagon...</DesktopShortcut>
					<DesktopShortcut icon={<NchIcon />} linked>NCH Suite</DesktopShortcut>
					<DesktopShortcut icon={<VideoPadIcon />} linked>VideoPad<br />Video Editor</DesktopShortcut>
				</Shortcuts>
				<Explorer />
				<BinSlot>
					<DesktopShortcut icon={<RecycleIcon />}>Recycle Bin</DesktopShortcut>
				</BinSlot>
			</DesktopArea>
			<TaskBar>
				<StartButton aria-label="Start" $w={48} $h={40}><StartIcon /></StartButton>
				<TaskSearch>
					<SearchIcon size={17} color="#222" />
					<input type="search" aria-label="Type here to search" placeholder="Type here to search" />
				</TaskSearch>
				{apps.map(app => (
					<TaskButton key={app.name} aria-label={app.name} $running={app.running} $active={app.active}>
						{app.icon}
					</TaskButton>
				))}
				<Tray>
					<IconButton aria-label="Hidden icons" $w={24} $h={40}><Line d="M2.500 10.500L8 5l5.500 5.500" color="#fff" width={1.3} /></IconButton>
					<IconButton aria-label="Network" $w={24} $h={40}><TrayNetwork /></IconButton>
					<IconButton aria-label="Volume" $w={24} $h={40}><TraySpeaker /></IconButton>
					<Clock>5:27 AM<br />4/11/2022</Clock>
					<IconButton aria-label="Notifications" $w={38} $h={40}>
						<Line size={18} box={18} d="M1.500 2.500h15v12h-5L9 17l-2.500-2.500h-5z" color="#fff" width={1.2} />
					</IconButton>
					<ShowDesktop aria-label="Show desktop" />
				</Tray>
			</TaskBar>
		</Screen>
	)
}

export default App
